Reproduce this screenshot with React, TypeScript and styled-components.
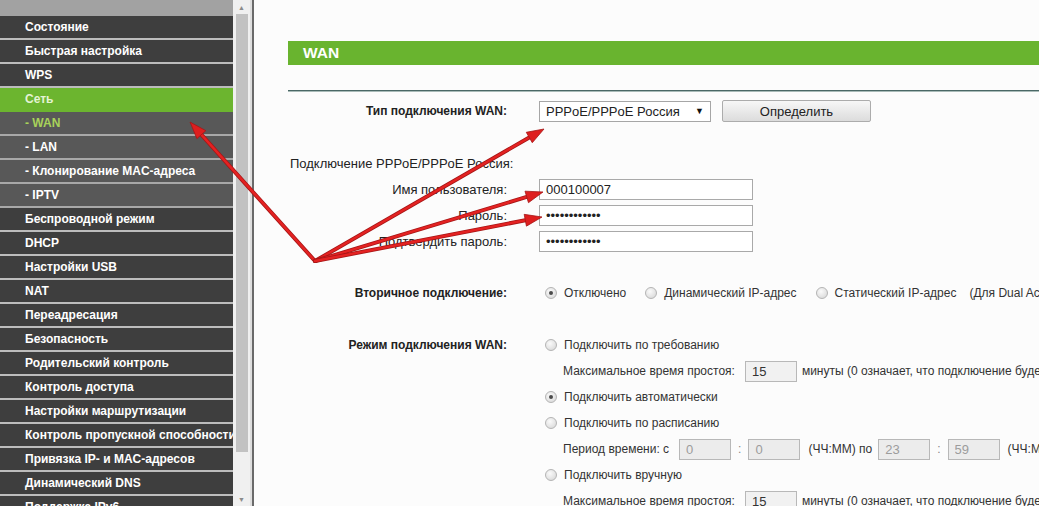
import React from "react";
import styled, { createGlobalStyle } from "styled-components";

const GlobalStyle = createGlobalStyle`
    html, body {
        margin: 0;
        padding: 0;
        background: #fcfcfc;
    }
    body {
        font-family: "Liberation Sans", Arial, sans-serif;
        color: #222;
    }
`;

const Page = styled.div`
    position: relative;
    display: flex;
    width: 1039px;
    height: 506px;
    overflow: hidden;
`;

/* ---------- sidebar ---------- */

const Sidebar = styled.nav`
    display: flex;
    flex-direction: column;
    width: 233px;
    flex-shrink: 0;
    overflow: hidden;
    background: #3e3e3e;
`;

const MenuTop = styled.div`
    height: 16px;
    flex-shrink: 0;
    background: #a2a2a2;
`;

type Variant = "normal" | "active" | "sub" | "current";

const MenuItem = styled.div<{ $variant: Variant }>`
    flex-shrink: 0;
    height: 22px;
    line-height: 22px;
    padding-left: 25px;
    font-size: 12px;
    font-weight: bold;
    white-space: nowrap;
    color: ${(p) =>
        p.$variant === "current" ? "#a8d25a" : p.$variant === "active" ? "#e4f3d4" : "#fff"};
    background: ${(p) =>
        p.$variant === "active" ? "#6cb52f" : p.$variant === "normal" ? "#3e3e3e" : "#585858"};
    border-bottom: 2px solid
        ${(p) => (p.$variant === "active" ? "#6cb52f" : p.$variant === "normal" ? "#bcbcbc" : "#a8a8a8")};
`;

const ScrollTrack = styled.div`
    display: flex;
    flex-direction: column;
    width: 17px;
    flex-shrink: 0;
    background: #f0f0f0;
`;

const ScrollArrow = styled.div`
    display: flex;
    align-items: center;
    justify-content: center;
    height: 14px;
    flex-shrink: 0;
    font-size: 7px;
    color: #8a8a8a;
    &:last-child {
        margin-top: auto;
    }
`;

const Thumb = styled.div`
    height: 438px;
    width: 12px;
    flex-shrink: 0;
    margin-left: 3px;
    background: #c2c2c2;
`;

const Divider = styled.div`
    width: 2px;
    flex-shrink: 0;
    background: #6a6a6a;
    border-left: 2px solid #dedede;
`;

/* ---------- content ---------- */

const Content = styled.main`
    flex: 1;
    min-width: 0;
    padding: 41px 0 0 34px;
    overflow: hidden;
`;

const TitleBar = styled.div`
    height: 24px;
    line-height: 24px;
    padding-left: 15px;
    background: #69b42f;
    color: #fff;
    font-size: 15.5px;
    font-weight: bold;
`;

const Rule = styled.div`
    height: 2px;
    margin-top: 25px;
    background: linear-gradient(#4a6866 50%, #a9bbb8 50%);
`;

const Form = styled.div`
    margin-top: 6px;
`;

const Row = styled.div`
    display: grid;
    grid-template-columns: 219px 1fr;
    column-gap: 32px;
    height: 26px;
    align-items: center;
`;

const Label = styled.div<{ $bold?: boolean }>`
    text-align: right;
    white-space: nowrap;
    font-size: ${(p) => (p.$bold ? "12px" : "13px")};
    font-weight: ${(p) => (p.$bold ? "bold" : "normal")};
    color: #222;
`;

const Heading = styled.div`
    grid-column: 1 / -1;
    padding-left: 2px;
    font-size: 13px;
    color: #222;
`;

const Value = styled.div<{ $small?: boolean; $indent?: boolean }>`
    grid-column: 2;
    display: flex;
    align-items: center;
    white-space: nowrap;
    font-size: ${(p) => (p.$small ? "12px" : "13px")};
    color: #333;
    padding-left: ${(p) => (p.$indent ? "24px" : "0")};
`;

const FakeSelect = styled.div`
    position: relative;
    box-sizing: border-box;
    width: 172px;
    height: 21px;
    line-height: 19px;
    padding-left: 6px;
    border: 1px solid #a6a6a6;
    background: #fff;
    font-size: 13px;
    color: #222;
`;

const Caret = styled.span`
    position: absolute;
    right: 6px;
    top: 0;
    font-size: 9px;
    color: #111;
`;

const Button = styled.button`
    box-sizing: border-box;
    width: 149px;
    height: 22px;
    margin-left: 11px;
    border: 1px solid #acacac;
    border-radius: 2px;
    background: linear-gradient(#f7f7f7, #dcdcdc);
    font-family: "Liberation Sans", Arial, sans-serif;
    font-size: 13px;
    color: #222;
`;

const TextInput = styled.input`
    box-sizing: border-box;
    width: 214px;
    height: 21px;
    padding: 0 6px;
    border: 1px solid #a9a9a9;
    background: #fff;
    font-family: "Liberation Sans", Arial, sans-serif;
    font-size: 13px;
    color: #222;
    outline: none;
`;

const TimeInput = styled.input<{ $disabled?: boolean }>`
    box-sizing: border-box;
    width: 52px;
    height: 21px;
    padding: 0 6px;
    border: 1px solid #b8b8b8;
    background: ${(p) => (p.$disabled ? "#ececec" : "#f1f1f1")};
    font-family: "Liberation Sans", Arial, sans-serif;
    font-size: 13px;
    color: ${(p) => (p.$disabled ? "#9c9c9c" : "#333")};
    outline: none;
`;

const Radio = styled.span<{ $checked?: boolean }>`
    position: relative;
    box-sizing: border-box;
    width: 12px;
    height: 12px;
    margin: 0 7px 0 6px;
    border-radius: 50%;
    border: 1px solid #b4b4b4;
    background: radial-gradient(circle at 40% 35%, #fafafa, #d4d4d4);
    flex-shrink: 0;
    &::after {
        content: "";
        display: ${(p) => (p.$checked ? "block" : "none")};
        position: absolute;
        left: 3px;
        top: 3px;
        width: 4px;
        height: 4px;
        border-radius: 50%;
        background: #4a4a4a;
    }
`;

const Option = styled.span`
    display: flex;
    align-items: center;
    margin-right: 13px;
`;

const Colon = styled.span`
    margin: 0 7px;
    color: #888;
`;

const Gap = styled.span<{ $w: number }>`
    display: inline-block;
    width: ${(p) => p.$w}px;
`;

/* ---------- red annotation arrows ---------- */

const Overlay = styled.svg`
    position: absolute;
    left: 0;
    top: 0;
    pointer-events: none;
`;

const origin = { x: 315, y: 261 };
const tips = [
    { x: 190, y: 122 },
    { x: 544, y: 129 },
    { x: 543, y: 192 },
    { x: 542, y: 217 },
];

function Arrow({ x, y }: { x: number; y: number }) {
    const a = Math.atan2(y - origin.y, x - origin.x);
    const len = 17;
    const half = 6;
    const bx = x - len * Math.cos(a);
    const by = y - len * Math.sin(a);
    const px = -Math.sin(a) * half;
    const py = Math.cos(a) * half;
    const head = `${x},${y} ${bx + px},${by + py} ${bx - px},${by - py}`;
    return (
        <g>
            <line x1={origin.x} y1={origin.y} x2={bx} y2={by} stroke="#a51616" strokeWidth={4} strokeLinecap="round" />
            <line x1={origin.x} y1={origin.y} x2={bx} y2={by} stroke="#e42222" strokeWidth={2.4} strokeLinecap="round" />
            <polygon points={head} fill="#de1f1f" stroke="#a51616" strokeWidth={0.8} />
        </g>
    );
}

const menu: { label: string; variant: Variant }[] = [
    { label: "Состояние", variant: "normal" },
    { label: "Быстрая настройка", variant: "normal" },
    { label: "WPS", variant: "normal" },
    { label: "Сеть", variant: "active" },
    { label: "- WAN", variant: "current" },
    { label: "- LAN", variant: "sub" },
    { label: "- Клонирование MAC-адреса", variant: "sub" },
    { label: "- IPTV", variant: "sub" },
    { label: "Беспроводной режим", variant: "normal" },
    { label: "DHCP", variant: "normal" },
    { label: "Настройки USB", variant: "normal" },
    { label: "NAT", variant: "normal" },
    { label: "Переадресация", variant: "normal" },
    { label: "Безопасность", variant: "normal" },
    { label: "Родительский контроль", variant: "normal" },
    { label: "Контроль доступа", variant: "normal" },
    { label: "Настройки маршрутизации", variant: "normal" },
    { label: "Контроль пропускной способности", variant: "normal" },
    { label: "Привязка IP- и MAC-адресов", variant: "normal" },
    { label: "Динамический DNS", variant: "normal" },
    { label: "Поддержка IPv6", variant: "normal" },
];

const dots = "••••••••••••";

export default function App() {
    return (
        <>
            <GlobalStyle />
            <Page>
                <Sidebar>
                    <MenuTop />
                    {menu.map((m) => (
                        <MenuItem key={m.label} $variant={m.variant}>
                            {m.label}
                        </MenuItem>
                    ))}
                </Sidebar>
                <ScrollTrack>
                    <ScrollArrow>▲</ScrollArrow>
                    <Thumb />
                    <ScrollArrow>▼</ScrollArrow>
                </ScrollTrack>
                <Divider />
                <Content>
                    <TitleBar>WAN</TitleBar>
                    <Rule />
                    <Form>
                        <Row>
                            <Label $bold>Тип подключения WAN:</Label>
                            <Value>
                                <FakeSelect>
                                    PPPoE/PPPoE Россия
                                    <Caret>▼</Caret>
                                </FakeSelect>
                                <Button>Определить</Button>
                            </Value>
                        </Row>
                        <Row />
                        <Row>
                            <Heading>Подключение PPPoE/PPPoE Россия:</Heading>
                        </Row>
                        <Row>
                            <Label>Имя пользователя:</Label>
                            <Value>
                                <TextInput readOnly defaultValue="000100007" />
                            </Value>
                        </Row>
                        <Row>
                            <Label>Пароль:</Label>
                            <Value>
                                <TextInput readOnly defaultValue={dots} />
                            </Value>
                        </Row>
                        <Row>
                            <Label>Подтвердить пароль:</Label>
                            <Value>
                                <TextInput readOnly defaultValue={dots} />
                            </Value>
                        </Row>
                        <Row />
                        <Row>
                            <Label $bold>Вторичное подключение:</Label>
                            <Value $small>
                                <Option>
                                    <Radio $checked />
                                    Отключено
                                </Option>
                                <Option>
                                    <Radio />
                                    Динамический IP-адрес
                                </Option>
                                <Option>
                                    <Radio />
                                    Статический IP-адрес
                                </Option>
                                <span>(Для Dual Access/Россия)</span>
                            </Value>
                        </Row>
                        <Row />
                        <Row>
                            <Label $bold>Режим подключения WAN:</Label>
                            <Value $small>
                                <Option>
                                    <Radio />
                                    Подключить по требованию
                                </Option>
                            </Value>
                        </Row>
                        <Row>
                            <Value $small $indent>
                                Максимальное время простоя:
                                <Gap $w={10} />
                                <TimeInput readOnly defaultValue="15" />
                                <Gap $w={5} />
                                минуты (0 означает, что подключение будет активно всегда)
                            </Value>
                        </Row>
                        <Row>
                            <Value $small>
                                <Option>
                                    <Radio $checked />
                                    Подключить автоматически
                                </Option>
                            </Value>
                        </Row>
                        <Row>
                            <Value $small>
                                <Option>
                                    <Radio />
                                    Подключить по расписанию
                                </Option>
                            </Value>
                        </Row>
                        <Row>
                            <Value $small $indent>
                                Период времени: с
                                <Gap $w={10} />
                                <TimeInput $disabled readOnly defaultValue="0" />
                                <Colon>:</Colon>
                                <TimeInput $disabled readOnly defaultValue="0" />
                                <Gap $w={8} />
                                (ЧЧ:ММ) по
                                <Gap $w={6} />
                                <TimeInput $disabled readOnly defaultValue="23" />
                                <Colon>:</Colon>
                                <TimeInput $disabled readOnly defaultValue="59" />
                                <Gap $w={8} />
                                (ЧЧ:ММ)
                            </Value>
                        </Row>
                        <Row>
                            <Value $small>
                                <Option>
                                    <Radio />
                                    Подключить вручную
                                </Option>
                            </Value>
                        </Row>
                        <Row>
                            <Value $small $indent>
                                Максимальное время простоя:
                                <Gap $w={10} />
                                <TimeInput readOnly defaultValue="15" />
                                <Gap $w={5} />
                                минуты (0 означает, что подключение будет активно всегда)
                            </Value>
                        </Row>
                    </Form>
                </Content>
                <Overlay width={1039} height={506} viewBox="0 0 1039 506">
                    {tips.map((t) => (
                        <Arrow key={`${t.x}-${t.y}`} x={t.x} y={t.y} />
                    ))}
                </Overlay>
            </Page>
        </>
    );
}
